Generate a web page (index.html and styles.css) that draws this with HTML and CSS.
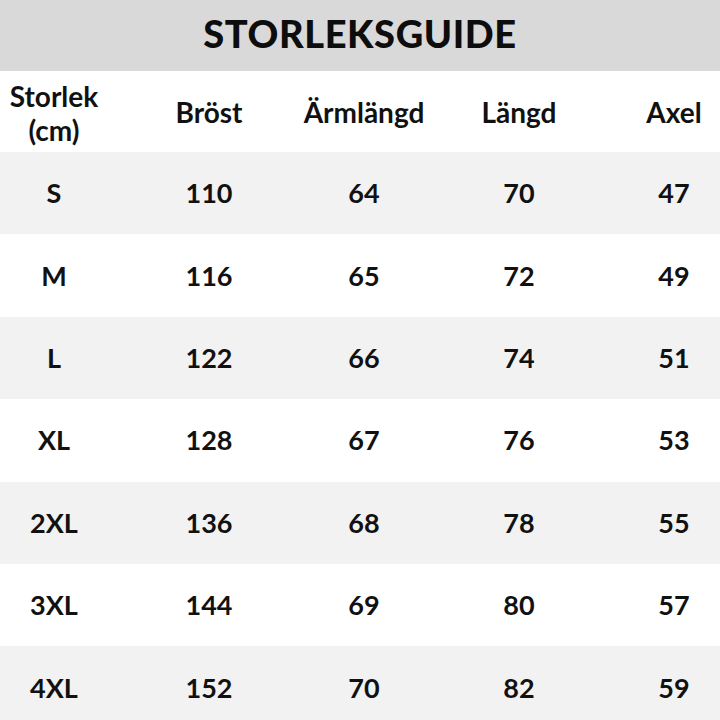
FILE: index.html
```html
<!DOCTYPE html>
<html lang="sv">
<head>
<meta charset="utf-8">
<title>Storleksguide</title>
<link rel="stylesheet" href="styles.css">
</head>
<body>
<div class="page">
  <h1 class="title">STORLEKSGUIDE</h1>
  <div class="table">
    <div class="row head">
      <div class="cell two">Storlek<br>(cm)</div>
      <div class="cell">Bröst</div>
      <div class="cell">Ärmlängd</div>
      <div class="cell">Längd</div>
      <div class="cell">Axel</div>
    </div>
    <div class="row alt"><div class="cell">S</div><div class="cell">110</div><div class="cell">64</div><div class="cell">70</div><div class="cell">47</div></div>
    <div class="row"><div class="cell">M</div><div class="cell">116</div><div class="cell">65</div><div class="cell">72</div><div class="cell">49</div></div>
    <div class="row alt"><div class="cell">L</div><div class="cell">122</div><div class="cell">66</div><div class="cell">74</div><div class="cell">51</div></div>
    <div class="row"><div class="cell">XL</div><div class="cell">128</div><div class="cell">67</div><div class="cell">76</div><div class="cell">53</div></div>
    <div class="row alt"><div class="cell">2XL</div><div class="cell">136</div><div class="cell">68</div><div class="cell">78</div><div class="cell">55</div></div>
    <div class="row"><div class="cell">3XL</div><div class="cell">144</div><div class="cell">69</div><div class="cell">80</div><div class="cell">57</div></div>
    <div class="row alt"><div class="cell">4XL</div><div class="cell">152</div><div class="cell">70</div><div class="cell">82</div><div class="cell">59</div></div>
  </div>
</div>
</body>
</html>
```
FILE: styles.css
```css
html, body {
  margin: 0;
  padding: 0;
  background: #ffffff;
}
body {
  width: 720px;
  height: 720px;
  overflow: hidden;
  font-family: "Lato", "Open Sans", sans-serif;
  font-weight: 700;
  color: #111111;
}
.page {
  width: 720px;
}
.title {
  margin: 0;
  height: 71px;
  box-sizing: border-box;
  padding-bottom: 5px;
  background: #d9d9d9;
  display: flex;
  align-items: center;
  justify-content: center;
  font-size: 38px;
  font-weight: 900;
  letter-spacing: 0.6px;
  color: #0d0d0d;
}
.table {
  margin-left: -23.5px;
  width: 775px;
}
.row {
  display: grid;
  grid-template-columns: repeat(5, 155px);
  height: 82.4px;
  align-items: center;
}
.row.head {
  height: 81px;
}
.row.alt {
  background: #f2f2f2;
}
.cell {
  text-align: center;
  font-size: 27px;
  line-height: 30px;
}
.head .cell {
  font-size: 28px;
}
.cell.two {
  line-height: 34px;
  padding-top: 2px;
}
```
